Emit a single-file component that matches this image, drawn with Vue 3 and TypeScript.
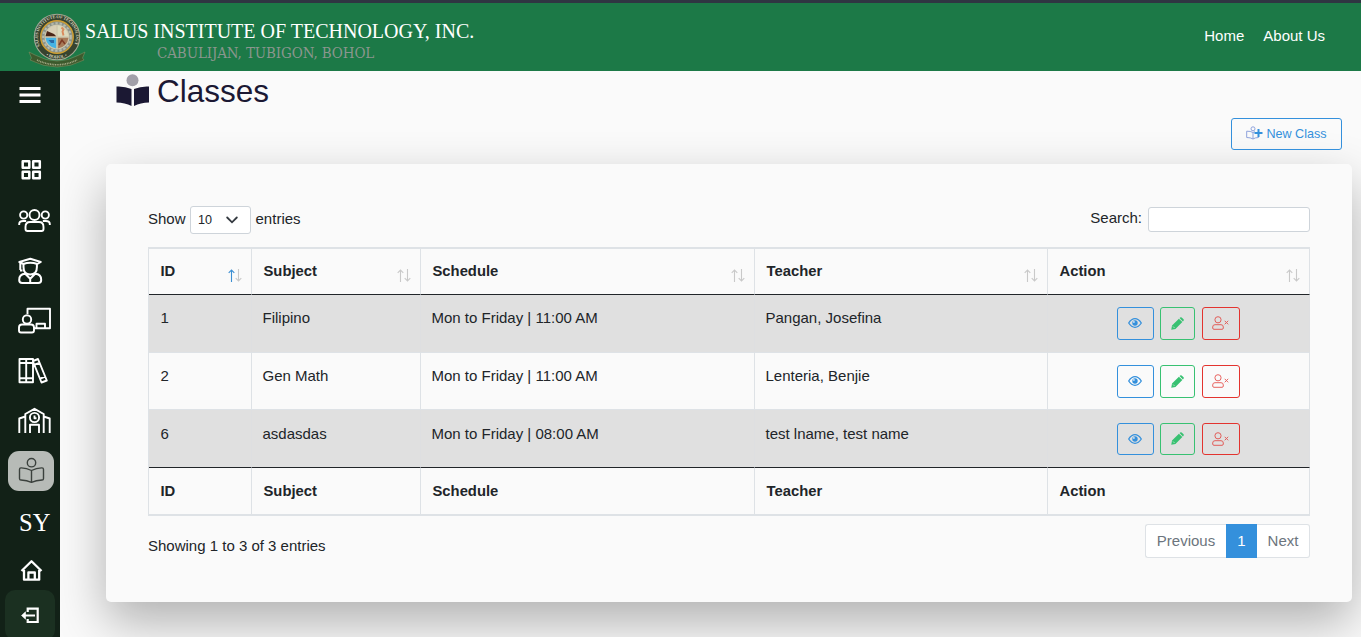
<script setup lang="ts">
interface ClassRow {
  id: number
  subject: string
  schedule: string
  teacher: string
}

const columns: string[] = ['ID', 'Subject', 'Schedule', 'Teacher', 'Action']
const rows: ClassRow[] = [
  { id: 1, subject: 'Filipino', schedule: 'Mon to Friday | 11:00 AM', teacher: 'Pangan, Josefina' },
  { id: 2, subject: 'Gen Math', schedule: 'Mon to Friday | 11:00 AM', teacher: 'Lenteria, Benjie' },
  { id: 6, subject: 'asdasdas', schedule: 'Mon to Friday | 08:00 AM', teacher: 'test lname, test name' },
]
</script>

<template>
  <div class="page">
    <header class="topbar">
      <svg class="logo" viewBox="0 0 60 60" width="60" height="60">
        <defs>
          <path id="ringTop" d="M13.200 38 A19 19 0 1 1 46.800 38" />
          <path id="ringBottom" d="M19 47.500 A21.500 21.500 0 0 0 41 47.500" />
        </defs>
        <path d="M2 44 L8 47 Q30 59 52 47 L58 44 L55.500 50 L57 52 Q30 66 3 52 L4.500 50Z" fill="#3d5a2d" stroke="#8a9468" stroke-width=".5" />
        <circle cx="30" cy="29" r="22.700" fill="#37432f" stroke="#a3a793" stroke-width="1.100" />
        <text class="ring"><textPath href="#ringTop" textLength="76">SALUS INSTITUTE OF TECHNOLOGY</textPath></text>
        <text class="ring"><textPath href="#ringBottom" textLength="22">• BOHOL •</textPath></text>
        <circle cx="30" cy="29" r="16.200" fill="#8b9189" stroke="#cf9f32" stroke-width="1.500" />
        <circle cx="30" cy="29" r="13.800" fill="none" stroke="#b8bcae" stroke-width="2" stroke-dasharray="2.400 1.800" />
        <circle cx="30" cy="29" r="12.500" fill="#cfc9ae" />
        <path d="M29.200 28.200V17.500A12 12 0 0 0 18.500 28.200Z" fill="#d9cfb6" />
        <path d="M18.500 28.200L20 23L27 26L29.200 28.200Z" fill="#4b2618" />
        <path d="M30.800 28.200V17.500A12 12 0 0 1 41.500 28.200Z" fill="#dcdabd" />
        <path d="M34.500 19.500l2 2-1 2 1 4" stroke="#d98a5c" stroke-width="1.900" fill="none" />
        <path d="M29.200 29.800V40.500A12 12 0 0 1 18.500 29.800Z" fill="#45b2e4" />
        <path d="M21.500 32h5.500v3h-3z" fill="#2869a5" />
        <path d="M30.800 29.800V40.500A12 12 0 0 0 41.500 29.800Z" fill="#a77a58" />
        <path d="M32 37l3-5 3 4" stroke="#7d3b25" stroke-width="1.500" fill="none" />
        <path d="M10 52 Q30 61.500 50 52" stroke="#a9ad8a" stroke-width="1.600" stroke-dasharray="1 .7" fill="none" />
      </svg>
      <div class="brand">
        <div class="name">SALUS INSTITUTE OF TECHNOLOGY, INC.</div>
        <div class="place">CABULIJAN, TUBIGON, BOHOL</div>
      </div>
      <nav class="links"><a>Home</a><a>About Us</a></nav>
    </header>

    <div class="body">
      <aside class="sidebar">
        <svg class="burger" viewBox="0 0 60 74" width="60" height="74"><path d="M19.500 17.500h21M19.500 24h21M19.500 30.500h21" stroke-width="2.800" /></svg>
        <svg viewBox="0 0 60 50"><path d="M22.700 16.200h6.600v6.600h-6.600zM33.200 16.200h6.600v6.600h-6.600zM22.700 26.700h6.600v6.600h-6.600zM33.200 26.700h6.600v6.600h-6.600z" stroke-width="2.500" /></svg>
        <svg viewBox="0 0 60 50">
          <circle cx="34.500" cy="20" r="5" /><circle cx="23.700" cy="20" r="3.600" /><circle cx="45.300" cy="20" r="3.600" />
          <path d="M19.200 30v-1q0-3 4-3h3M49.800 30v-1q0-3-4-3h-3M30 27h9q4.500 0 4.500 5v2q0 2-2 2h-14q-2 0-2-2v-2q0-5 4.500-5z" />
        </svg>
        <svg viewBox="0 0 60 50">
          <path d="M19.300 17l11-3.200 10.500 3.200-3.500 2q-7-2.500-14 0zM23.500 19v3q0 7.500 6.700 7.500t6.700-7.500v-3M20.300 17v8M20 25.500h2.500M22.200 38q-3 0-3-3 0-6 6-6.200l5 5 5-5q6 .2 6 6.200 0 3-3 3zM30.200 34v3.500" stroke-width="2" />
        </svg>
        <svg viewBox="0 0 60 50">
          <path d="M27.500 19v-5.200h22.500v19.500h-15.500M36.500 33v-4.300h8.500V33M22 29.500h9q3 0 3 3v3q0 2-2 2h-11q-2 0-2-2v-3q0-3 3-3z" /><circle cx="27" cy="24.500" r="4.200" />
        </svg>
        <svg viewBox="0 0 60 50"><path d="M19.500 14h13.500v23.300h-13.500zM26.200 14v23.300M19.500 18h13.500M19.500 33.300h13.500M33.200 16l4.800-2 8.800 21.500-5.300 2-8.300-20.500M35 19.500l4.500-1.700M40.500 33.500l4.500-1.800" stroke-width="1.900" /></svg>
        <svg viewBox="0 0 60 50"><path d="M19.300 38V23.500l6-2M25.300 38V19l9.200-5.200 9.200 5.200v19M49.700 38V23.500l-6-2M30 38v-8.300h9V38M34.500 20.500v2.700h2" stroke-width="1.900" /><circle cx="34.500" cy="22.500" r="4.600" /></svg>
        <svg viewBox="0 0 60 50">
          <rect x="8" y="6" width="46" height="40" rx="11" fill="#b7bbb7" stroke="none" />
          <g stroke="#3b413d" stroke-width="1.400"><circle cx="31.500" cy="17.700" r="4.200" /><path d="M31.500 25.500q-5-2.700-10.500-2.600-1.500 0-1.500 1.500v9q0 1.500 1.500 1.600 6 .3 10.500 2.400 4.500-2.100 10.500-2.400 1.500-.1 1.500-1.600v-9q0-1.500-1.500-1.500-5.500-.1-10.500 2.600zv11.500" /></g>
        </svg>
        <div class="sy">SY</div>
        <svg class="home" viewBox="0 0 60 45"><path d="M21.500 26l10-9.800 10 9.800M24 25v9.700h15.200V25M28.400 34.500v-7h6.400v7" stroke-width="2.300" /></svg>
        <svg class="logout" viewBox="0 0 60 47">
          <rect x="5" y="0" width="50" height="50" rx="10" fill="#1b3021" stroke="none" />
          <path d="M27.700 22v-3.300h10v13.300h-10V29M24 25.500h11" stroke-width="2.200" stroke-linejoin="miter" /><path d="M21.500 25.500l4-3.700v7.400z" fill="#fff" stroke-width=".6" />
        </svg>
      </aside>

      <main>
        <h1>
          <svg width="34" height="34" viewBox="0 0 34 34"><circle cx="16.500" cy="7.200" r="6" fill="#a19fa9" /><path d="M.5 13.500q8-.5 15 2.500V33Q9 29.500.5 29.500zM33 13.500q-8-.5-15 2.500v17q6.500-3.500 15-3.500z" fill="#1b1833" /></svg>
          <span>Classes</span>
        </h1>
        <div class="actions">
          <button class="new">
            <svg width="17" height="14" viewBox="0 0 17 14" fill="none" stroke="#8ea2dc"><circle cx="7" cy="2.800" r="2" /><path d="M7 6.500Q4.500 5 .7 5.200v6.300q4 0 6.300 1.500 2.300-1.500 5.500-1.500V9.500M7 6.500V13M7 6.500l2-.8" /><path d="M12.500 3v8M8.500 7h8" stroke="#3490dc" stroke-width="2" /></svg>
            <span>New Class</span>
          </button>
        </div>

        <section class="card">
          <div class="controls">
            <div class="length"><span>Show</span><div class="select"><span>10</span><svg width="12" height="8" viewBox="0 0 12 8"><path d="M1.200 1.500L6 6.300l4.800-4.800" fill="none" stroke="#343a40" stroke-width="1.800" stroke-linecap="round" /></svg></div><span>entries</span></div>
            <label class="search"><span>Search:</span><input type="text" /></label>
          </div>
          <table>
            <colgroup><col class="c1" /><col class="c2" /><col class="c3" /><col class="c4" /><col class="c5" /></colgroup>
            <thead>
              <tr>
                <th v-for="(c, i) in columns" :key="c">
                  <div class="th">
                    <span>{{ c }}</span>
                    <svg width="15" height="15" viewBox="0 0 15 15" fill="none">
                      <path d="M3.500 14V2M.7 4.800L3.500 2l2.800 2.800" :stroke="i === 0 ? '#3c8fd2' : '#c9c9c9'" stroke-width="1.100" />
                      <path d="M10.500 1v12M7.700 10.200l2.800 2.800 2.800-2.800" stroke="#c9c9c9" stroke-width="1.100" />
                    </svg>
                  </div>
                </th>
              </tr>
            </thead>
            <tbody>
              <tr v-for="r in rows" :key="r.id">
                <td>{{ r.id }}</td><td>{{ r.subject }}</td><td>{{ r.schedule }}</td><td>{{ r.teacher }}</td>
                <td class="buttons">
                  <div>
                    <button class="view"><svg width="14" height="10" viewBox="0 0 14 10"><path d="M.7 5Q3.500.7 7 .7T13.300 5Q10.500 9.300 7 9.300T.7 5z" fill="none" stroke="currentColor" stroke-width="1.300" /><circle cx="7" cy="5" r="2.700" fill="currentColor" /><circle cx="5.900" cy="3.900" r=".9" fill="#dceaf6" /></svg></button>
                    <button class="edit"><svg width="13" height="13" viewBox="0 0 14 14"><path d="M.3 13.700l.8-4.500L8.500 1.800l3.700 3.700-7.400 7.400zM9.200 1.200l.7-.7q.8-.6 1.600 0l2 2q.6.800 0 1.600l-.7.700z" fill="currentColor" /><path d="M2.200 10.200l1.600 1.600" stroke="#d9f0e2" stroke-width=".8" /></svg></button>
                    <button class="remove"><svg width="17" height="14" viewBox="0 0 17 14" fill="none" stroke="currentColor"><circle cx="6" cy="3.800" r="3.100" /><path d="M3 8.700h6q2.300 0 2.300 2.300v1q0 1.300-1.300 1.300H2Q.7 13.300.7 12v-1q0-2.300 2.300-2.300zM12.700 4.800l3.500 3.500M16.200 4.800l-3.500 3.500" /></svg></button>
                  </div>
                </td>
              </tr>
            </tbody>
            <tfoot><tr><th v-for="c in columns" :key="c">{{ c }}</th></tr></tfoot>
          </table>
          <div class="footer">
            <div class="info">Showing 1 to 3 of 3 entries</div>
            <div class="pager"><span class="prev">Previous</span><span class="current">1</span><span class="next">Next</span></div>
          </div>
        </section>
      </main>
    </div>
  </div>
</template>

<style>
body { margin: 0; overflow: hidden; }
</style>

<style scoped>
* { box-sizing: border-box; }
.page { width: 1361px; height: 637px; overflow: hidden; background: #fafafa; color: #212529; font: 15px/23px "Liberation Sans", Arial, sans-serif; display: flex; flex-direction: column; }
.topbar { height: 71px; flex: none; background: #1c7947; border-top: 3px solid #2f3542; display: flex; position: relative; z-index: 2; }
.logo { margin: 5px 0 0 27px; }
.ring { font: bold 4.5px "Liberation Serif", serif; fill: #d2d3be; }
.brand { margin: 16px 0 0 -2px; }
.name { font: 20px/24px "Liberation Serif", serif; color: #fff; white-space: nowrap; width: 390px; }
.place { font: 15px/19px "DejaVu Serif Condensed", "DejaVu Serif", serif; color: #8a968e; padding-left: 72px; padding-top: 1px; letter-spacing: -.12px; white-space: nowrap; }
.links { margin: 21px 36px 0 auto; display: flex; gap: 19px; color: #fff; }
.body { display: flex; flex: 1; min-height: 0; }
.sidebar { width: 60px; flex: none; background: #122117; display: flex; flex-direction: column; position: relative; z-index: 1; }
.sidebar svg { width: 60px; height: 50px; flex: none; fill: none; stroke: #fff; stroke-width: 1.9; stroke-linejoin: round; }
.sidebar .burger { height: 74px; }
.sidebar .home { height: 45px; }
.sidebar .logout { height: 47px; }
.sy { height: 50px; padding-left: 19px; font: 24.5px/56px "Liberation Serif", serif; color: #fff; }
main { flex: 1; min-width: 0; display: flex; flex-direction: column; }
h1 { margin: 0; height: 47px; padding: 2px 0 0 56px; display: flex; gap: 7px; font-size: 31.5px; line-height: 37px; font-weight: 400; color: #1b1833; }
.actions { display: flex; justify-content: flex-end; padding-right: 19px; height: 46px; position: relative; z-index: 1; }
button { font-family: inherit; background: transparent; border: 1px solid currentColor; border-radius: 3px; padding: 0; display: flex; align-items: center; justify-content: center; }
.new { width: 111px; height: 32px; gap: 3px; font-size: 12.6px; color: #3490dc; }
.new svg { margin-top: -2px; }
.card { width: 1246px; height: 438px; margin-left: 46px; padding: 42px 42px 0; border-radius: 5px; background: #fafafa; box-shadow: 0 20px 50px rgba(0, 0, 0, .3); }
.controls { display: flex; justify-content: space-between; height: 41px; }
.length { display: flex; gap: 4.5px; height: 28px; align-items: center; line-height: 26px; }
.length > span { padding-bottom: 2px; }
.select { width: 61px; height: 28px; border: 1px solid #ced4da; border-radius: 3px; background: #fff; display: flex; align-items: center; justify-content: space-between; padding: 0 12px 0 7px; font-size: 12.6px; }
.search { display: flex; gap: 6px; height: 26px; line-height: 24px; }
.search input { width: 162px; height: 25px; margin-top: 1px; background: #fff; border: 1px solid #ced4da; border-radius: 3px; }
table { width: 1162px; table-layout: fixed; border-collapse: separate; border-spacing: 0; border: solid #dee2e6; border-width: 1px 0 1px 1px; }
.c1 { width: 103px; } .c2 { width: 169px; } .c3 { width: 334px; } .c4 { width: 293px; } .c5 { width: 262px; }
th, td { border-right: 1px solid #dee2e6; padding: 0 11.5px; text-align: left; vertical-align: top; }
td { height: 58px; padding-top: 12px; border-bottom: 1px solid #dee2e6; line-height: 21px; }
td:not(:first-child) { padding-left: 10.5px; }
tbody tr:nth-child(odd) td { background: #e0e0e0; border-right-color: #dedfe1; }
tbody tr:nth-child(2) td { height: 57px; }
tbody tr:last-child td { height: 57px; padding-top: 13px; border-bottom: 0; }
thead th { height: 47px; border-top: 1px solid #dee2e6; border-bottom: 1px solid #212529; padding-right: 8px; font-size: 14.8px; }
.th { display: flex; justify-content: space-between; padding-top: 11px; }
.th svg { margin-top: 8px; }
tfoot th { height: 48px; border-top: 1px solid #212529; border-bottom: 1px solid #dee2e6; padding-top: 12px; font-size: 14.8px; }
.buttons div { display: flex; justify-content: center; }
tbody td.buttons:last-child { padding-left: 11.5px; }
.buttons button { height: 33px; padding: 0 1px 1px 0; }
tbody tr:last-child button { height: 32px; }
.view { width: 37px; color: #3490dc; margin-right: 6px; }
.edit { width: 35px; color: #38c172; margin-right: 7px; }
.remove { width: 38px; color: #e3342f; }
.remove svg { opacity: .75; }
.footer { display: flex; justify-content: space-between; padding-top: 8px; }
.info { padding-top: 10px; }
.pager { display: flex; height: 34px; line-height: 32px; color: #6c757d; }
.pager span { border: 1px solid #dee2e6; background: #fff; text-align: center; }
.pager .prev { width: 81px; border-right: 0; border-radius: 3px 0 0 3px; }
.pager .current { width: 31px; background: #3490dc; border-color: #3490dc; color: #fff; }
.pager .next { width: 53px; border-left: 0; border-radius: 0 3px 3px 0; }
</style>
